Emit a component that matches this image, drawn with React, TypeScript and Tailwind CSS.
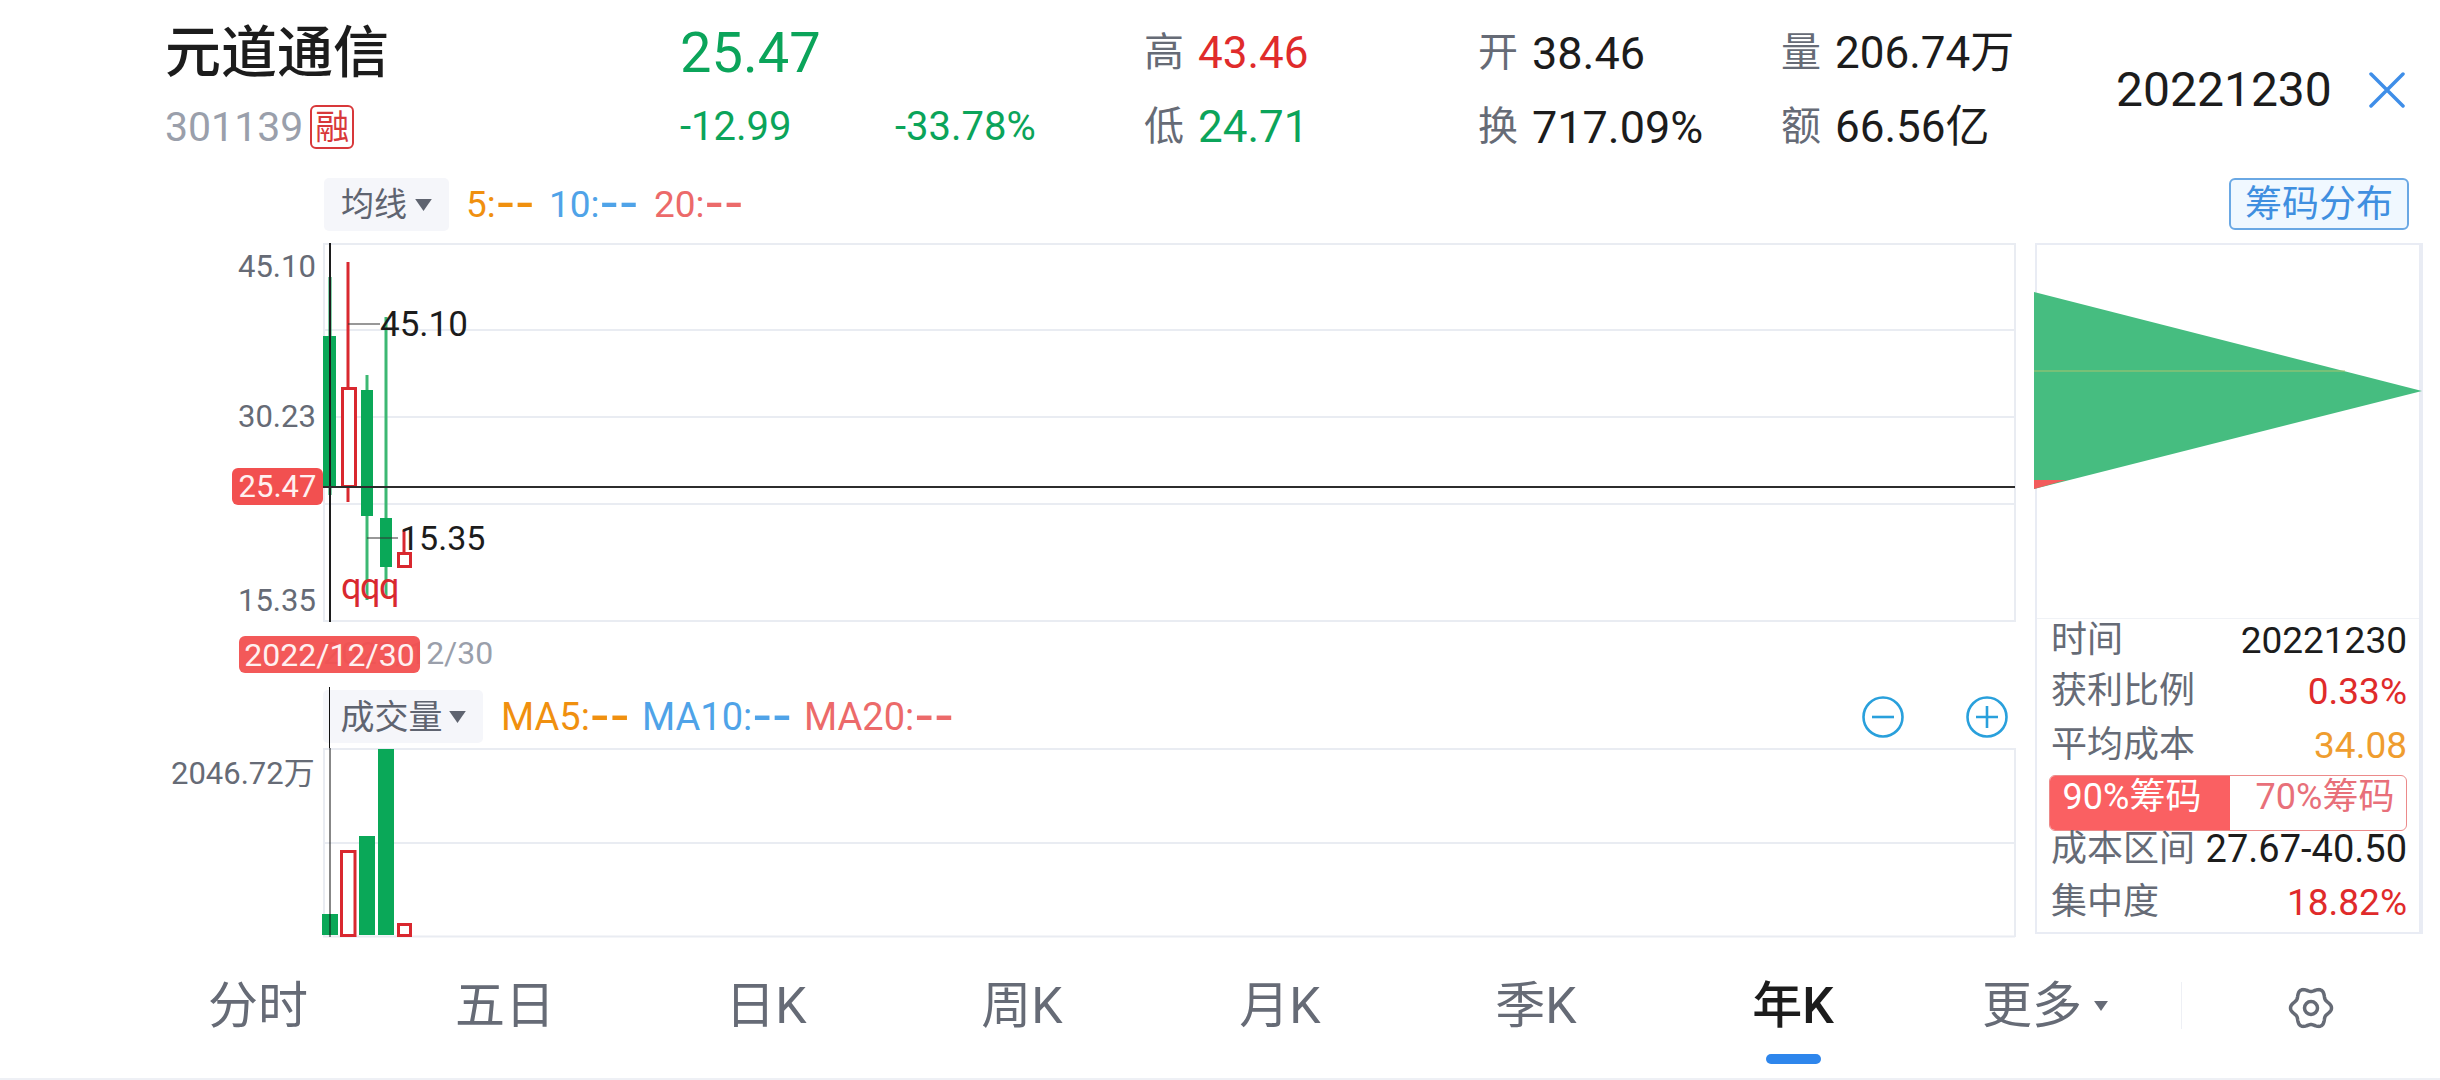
const gearPath = () => {
  const pts: string[] = [];
  for (let i = 0; i < 120; i++) {
    const t = (i / 120) * Math.PI * 2;
    const r = 18.5 + 2 * Math.cos(6 * t);
    pts.push(`${(24 + r * Math.cos(t)).toFixed(2)},${(24 + r * Math.sin(t)).toFixed(2)}`);
  }
  return pts.join(" ");
};

const Caret = ({ className }: { className: string }) => (
  <svg viewBox="0 0 18 13" className={className}>
    <polygon points="0,0 18,0 9,13" fill="currentColor" />
  </svg>
);

// the app draws wider dashes than Roboto has
const Dash = () => (
  <span className="relative top-[3px] text-[1.45em] leading-[0] [font-family:'DejaVu_Sans',sans-serif]">--</span>
);

const Header = () => (
  <header className="flex h-[170px] pl-[165px] pt-[16px]">
    <div className="w-[515px]">
      <div className="flex h-[74px] items-center text-[56px] font-medium leading-none text-[#1c1c1c]">元道通信</div>
      <div className="flex h-[74px] items-center">
        <span className="text-[41px] leading-none text-[#9a9fab]">301139</span>
        <span className="ml-[7px] flex h-[44px] w-[44px] items-center justify-center rounded-[6px] border-2 border-[#d8383a] text-[34px] leading-none text-[#d8383a]">融</span>
      </div>
    </div>
    <div className="w-[464px] text-[#0ba45a]">
      <div className="flex h-[74px] items-center text-[56px] leading-none">25.47</div>
      <div className="flex h-[74px] items-center text-[40px] leading-none">
        <span className="w-[215px]">-12.99</span>
        <span>-33.78%</span>
      </div>
    </div>
    <div className="w-[334px] text-[44px] leading-none">
      <div className="flex h-[74px] items-center gap-[14px]">
        <span className="text-[40px] text-[#666b76]">高</span>
        <span className="text-[#e02b2b]">43.46</span>
      </div>
      <div className="flex h-[74px] items-center gap-[14px]">
        <span className="text-[40px] text-[#666b76]">低</span>
        <span className="text-[#0ba45a]">24.71</span>
      </div>
    </div>
    <div className="w-[303px] text-[45px] leading-none text-[#1c1c1c]">
      <div className="flex h-[74px] items-center gap-[14px]">
        <span className="text-[40px] text-[#666b76]">开</span>
        <span>38.46</span>
      </div>
      <div className="flex h-[74px] items-center gap-[14px]">
        <span className="text-[40px] text-[#666b76]">换</span>
        <span>717.09%</span>
      </div>
    </div>
    <div className="w-[335px] text-[44px] leading-none text-[#1c1c1c]">
      <div className="flex h-[74px] items-center gap-[14px]">
        <span className="text-[40px] text-[#666b76]">量</span>
        <span>206.74万</span>
      </div>
      <div className="flex h-[74px] items-center gap-[14px]">
        <span className="text-[40px] text-[#666b76]">额</span>
        <span>66.56亿</span>
      </div>
    </div>
    <div className="flex h-[148px] items-center">
      <span className="text-[48px] leading-none text-[#1c1c1c]">20221230</span>
      <svg viewBox="0 0 36 36" className="ml-[37px] h-[36px] w-[36px]">
        <path d="M2 2 L34 34 M34 2 L2 34" stroke="#3f8ee8" strokeWidth="3.5" strokeLinecap="round" fill="none" />
      </svg>
    </div>
  </header>
);

const LegendRow = () => (
  <div className="flex h-[73px] pl-[324px] pr-[31px] pt-[8px]">
    <div className="flex h-[53px] w-[125px] shrink-0 items-center justify-center gap-[8px] rounded-[5px] bg-[#f5f6fa] text-[33px] leading-none text-[#5f6470]">
      均线
      <Caret className="h-[12px] w-[17px]" />
    </div>
    <div className="flex h-[53px] items-center whitespace-nowrap text-[37px] leading-none">
      <span className="ml-[17px] w-[83px] text-[#f0900f]">5:<Dash /></span>
      <span className="w-[105px] text-[#4fa3e8]">10:<Dash /></span>
      <span className="text-[#ec6a6a]">20:<Dash /></span>
    </div>
    <div className="ml-auto flex h-[52px] w-[180px] shrink-0 items-center justify-center rounded-[6px] border-2 border-[#6aa8e4] bg-[#f0f8ff] text-[37px] leading-none text-[#3f8fe0]">
      筹码分布
    </div>
  </div>
);

const PriceChart = () => (
  <div className="relative h-[379px]">
    <svg viewBox="323 243 1693 379" className="absolute left-[323px] top-0 h-[379px] w-[1693px] overflow-visible">
      <g stroke="#e9ecf2" strokeWidth="2" fill="none">
        <path d="M323 244H2015 M323 330H2015 M323 417H2015 M323 504H2015 M323 621H2015 M324 243V622 M2015 243V622" />
      </g>
      <path d="M330 277V495" stroke="#0aa858" strokeWidth="3" />
      <rect x="323" y="336" width="13" height="151" fill="#0aa858" />
      <path d="M348 262V387 M348 487V502" stroke="#d9282f" strokeWidth="3" />
      <rect x="342.5" y="388.5" width="13" height="98" fill="#fff" stroke="#d9282f" strokeWidth="3" />
      <path d="M367 375V600" stroke="#3cb873" strokeWidth="3" />
      <rect x="361" y="390" width="12" height="126" fill="#0aa858" />
      <path d="M386 317V597" stroke="#3cb873" strokeWidth="3" />
      <rect x="380" y="518" width="12" height="49" fill="#0aa858" />
      <path d="M404 530V552" stroke="#d9282f" strokeWidth="3" />
      <rect x="398.5" y="553.5" width="12" height="13" fill="#fff" stroke="#d9282f" strokeWidth="3" />
      <path d="M348 324H380 M367 538H398" stroke="#333" strokeWidth="1.2" />
      <path d="M330 243V622" stroke="#1c1c1c" strokeWidth="2" />
      <path d="M323 487H2015" stroke="#2c2c2c" strokeWidth="2" />
    </svg>
    <span className="absolute left-[238px] top-[8px] text-[31px] leading-none text-[#666b76]">45.10</span>
    <span className="absolute left-[238px] top-[158px] text-[31px] leading-none text-[#666b76]">30.23</span>
    <span className="absolute left-[238px] top-[342px] text-[31px] leading-none text-[#666b76]">15.35</span>
    <span className="absolute left-[232px] top-[225px] flex h-[37px] w-[91px] items-center justify-center rounded-[6px] bg-[#f25050] text-[31px] leading-none text-[#fff0f0]">25.47</span>
    <span className="absolute left-[380px] top-[64px] text-[35px] leading-none text-[#1c1c1c]">45.10</span>
    <span className="absolute left-[400px] top-[278px] text-[34px] leading-none text-[#1c1c1c]">15.35</span>
    <span className="absolute left-[341px] top-[326px] text-[36px] leading-none tracking-[-1.5px] text-[#d9282f]">qqq</span>
  </div>
);

const DateGap = () => (
  <div className="relative h-[68px]">
    <span className="absolute left-[323px] top-[15px] text-[32px] leading-none text-[#9a9fab]">2022/12/30</span>
    <span className="absolute left-[239px] top-[14px] flex h-[37px] w-[181px] items-center justify-center rounded-[6px] bg-[#f25050]/95 text-[32px] leading-none text-[#fff0f0]">2022/12/30</span>
  </div>
);

const VolumeLegend = () => (
  <div className="relative flex h-[58px] pl-[323px]">
    <div className="flex h-[53px] w-[160px] shrink-0 items-center justify-center gap-[6px] rounded-[5px] bg-[#f5f6fa] text-[34px] leading-none text-[#5f6470]">
      成交量
      <Caret className="h-[12px] w-[17px]" />
    </div>
    <div className="flex h-[53px] items-center whitespace-nowrap text-[38px] leading-none">
      <span className="ml-[18px] w-[141px] text-[#f0900f]">MA5:<Dash /></span>
      <span className="w-[162px] text-[#4fa3e8]">MA10:<Dash /></span>
      <span className="text-[#ec6a6a]">MA20:<Dash /></span>
    </div>
    <div className="ml-auto mr-[8px] flex h-[53px] items-center gap-[62px]">
      <svg viewBox="0 0 42 42" className="h-[42px] w-[42px]">
        <circle cx="21" cy="21" r="19.5" fill="none" stroke="#29a0dc" strokeWidth="2.6" />
        <path d="M10 21H32" stroke="#29a0dc" strokeWidth="2.6" />
      </svg>
      <svg viewBox="0 0 42 42" className="h-[42px] w-[42px]">
        <circle cx="21" cy="21" r="19.5" fill="none" stroke="#29a0dc" strokeWidth="2.6" />
        <path d="M10 21H32 M21 10V32" stroke="#29a0dc" strokeWidth="2.6" />
      </svg>
    </div>
    <span className="absolute left-[329px] top-[-3px] h-[61px] w-[1px] bg-[#111]" />
  </div>
);

const VolumeChart = () => (
  <div className="relative h-[189px]">
    <svg viewBox="323 748 1693 189" className="absolute left-[323px] top-0 h-[189px] w-[1693px] overflow-visible">
      <path d="M323 749H2015 M323 843H2015 M323 936.5H2015 M324 748V937 M2015 748V937" stroke="#e9ecf2" strokeWidth="2" fill="none" />
      <rect x="322" y="914" width="16" height="21" fill="#0aa858" />
      <rect x="341.5" y="851.5" width="13.5" height="84" fill="#fff" stroke="#d9282f" strokeWidth="3" />
      <rect x="359" y="836" width="16" height="99" fill="#0aa858" />
      <rect x="378" y="749" width="16" height="186" fill="#0aa858" />
      <rect x="398.5" y="924.5" width="12" height="11" fill="#fff" stroke="#d9282f" strokeWidth="3" />
      <path d="M330 748V937" stroke="#111" strokeWidth="1" />
    </svg>
    <span className="absolute left-[171px] top-[10px] text-[31px] leading-none text-[#666b76]">2046.72万</span>
  </div>
);

const ChipRow = ({ label, value, color, className }: { label: string; value: string; color: string; className: string }) => (
  <div className={`flex h-[36px] items-center justify-between pl-[14px] pr-[12px] leading-none ${className}`}>
    <span className="text-[36px] text-[#666b76]">{label}</span>
    <span className={color}>{value}</span>
  </div>
);

const ChipPanel = () => (
  <aside className="ml-[19px] h-[691px] w-[388px] border-2 border-r-4 border-[#e9ecf4]">
    <div className="h-[374px] border-b border-[#f0f2f6]">
      <svg viewBox="2037 245 382 374" className="h-[374px] w-[382px] overflow-visible">
        <polygon points="2034,292 2422,391 2034,489" fill="#46bd80" />
        <polygon points="2034,480 2066,480 2034,489" fill="#f25c5c" />
        <path d="M2034 371H2345" stroke="#a9c46f" strokeWidth="1" />
      </svg>
    </div>
    <ChipRow className="mt-[3px]" label="时间" value="20221230" color="text-[37px] text-[#1c1c1c]" />
    <ChipRow className="mt-[15px]" label="获利比例" value="0.33%" color="text-[37px] text-[#e02b2b]" />
    <ChipRow className="mt-[18px]" label="平均成本" value="34.08" color="text-[37px] text-[#ef9d2f]" />
    <div className="mx-[12px] mt-[12px] flex h-[56px] overflow-hidden rounded-[6px] border border-[#ec8a8a] text-[36px] leading-none">
      <div className="flex w-[180px] items-center justify-center bg-[#fa6062] pb-[12px] pr-[16px] text-white">90%筹码</div>
      <div className="flex flex-1 items-center justify-center pb-[12px] pl-[14px] text-[#e8707a]">70%筹码</div>
    </div>
    <ChipRow className="" label="成本区间" value="27.67-40.50" color="text-[38px] text-[#1c1c1c]" />
    <ChipRow className="mt-[17px]" label="集中度" value="18.82%" color="text-[37px] text-[#e02b2b]" />
  </aside>
);

const Tab = ({ label, className }: { label: string; className: string }) => (
  <div className={`flex h-[50px] w-[256px] items-center justify-center text-[50px] leading-none ${className}`}>{label}</div>
);

const TabBar = () => (
  <nav className="flex h-[143px] border-b-2 border-[#eef0f5] pl-[130px] pt-[44px]">
    <Tab label="分时" className="text-[#666b76]" />
    <Tab label="五日" className="pr-[18px] text-[#666b76]" />
    <Tab label="日K" className="pr-[8px] text-[#666b76]" />
    <Tab label="周K" className="pr-[8px] text-[#666b76]" />
    <Tab label="月K" className="pr-[4px] text-[#666b76]" />
    <Tab label="季K" className="pr-[4px] text-[#666b76]" />
    <div className="relative">
      <Tab label="年K" className="pr-[2px] font-medium text-[#1c1c1c]" />
      <span className="absolute left-[100px] top-[73px] h-[10px] w-[55px] rounded-full bg-[#2e86ec]" />
    </div>
    <div className="flex h-[50px] w-[256px] items-center justify-center gap-[12px] pr-[10px] text-[50px] leading-none text-[#666b76]">
      更多
      <Caret className="h-[10px] w-[14px]" />
    </div>
    <div className="ml-[3px] mt-[1px] h-[47px] w-px bg-[#eef0f5]" />
    <svg viewBox="0 0 48 48" className="ml-[105px] mt-[3px] h-[48px] w-[48px]">
      <polygon points={gearPath()} fill="none" stroke="#666b76" strokeWidth="3.5" strokeLinejoin="round" />
      <circle cx="24" cy="24" r="6.5" fill="none" stroke="#666b76" strokeWidth="3.5" />
    </svg>
  </nav>
);

export default function App() {
  return (
    <div className="flex h-[1080px] w-[2440px] flex-col overflow-hidden bg-white [font-family:Roboto,'Noto_Sans_CJK_SC',sans-serif]">
      <Header />
      <LegendRow />
      <div className="flex h-[694px]">
        <div className="w-[2016px]">
          <PriceChart />
          <DateGap />
          <VolumeLegend />
          <VolumeChart />
        </div>
        <ChipPanel />
      </div>
      <TabBar />
    </div>
  );
}
